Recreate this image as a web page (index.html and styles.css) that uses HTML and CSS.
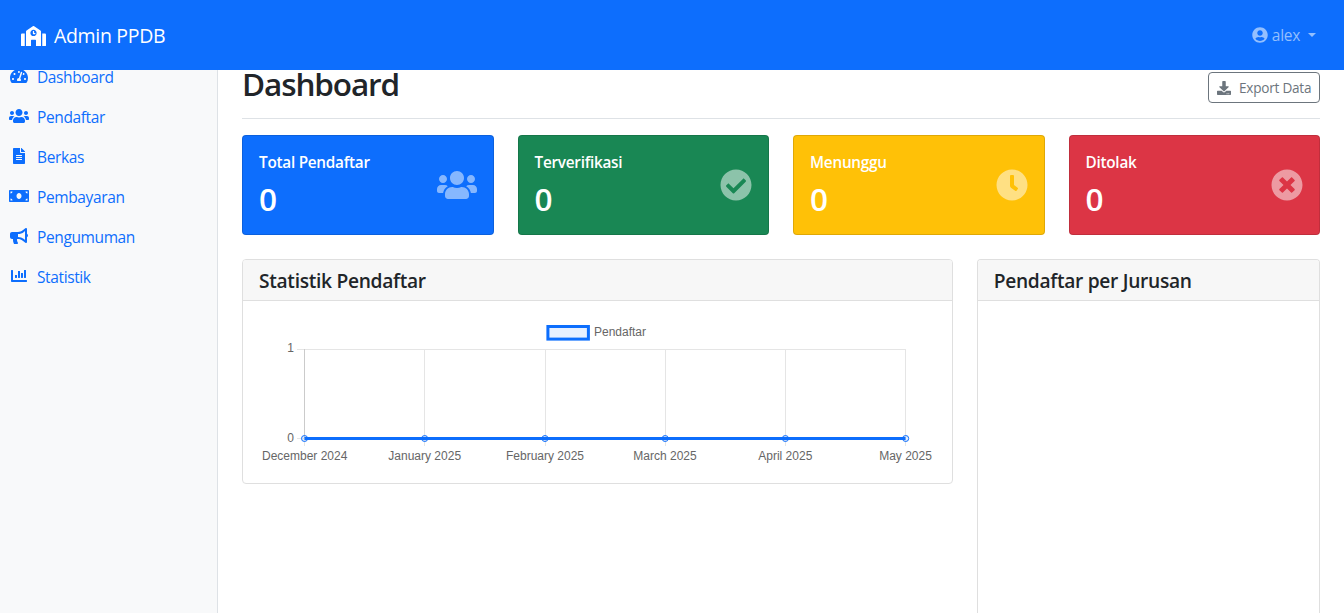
FILE: index.html
```html
<!DOCTYPE html>
<html lang="id">
<head>
<meta charset="utf-8">
<title>Dashboard - Admin PPDB</title>
<link rel="stylesheet" href="styles.css">
</head>
<body>
<svg class="sprite" aria-hidden="true">
  <symbol id="users" viewBox="0 0 640 512"><path d="M96 224c35.3 0 64-28.7 64-64s-28.7-64-64-64-64 28.7-64 64 28.7 64 64 64zm448 0c35.3 0 64-28.7 64-64s-28.7-64-64-64-64 28.7-64 64 28.7 64 64 64zm32 32h-64c-17.6 0-33.5 7.1-45.1 18.6 40.3 22.1 68.9 62 75.1 109.4h66c17.7 0 32-14.3 32-32v-32c0-35.3-28.7-64-64-64zm-256 0c61.9 0 112-50.1 112-112S381.9 32 320 32 208 82.1 208 144s50.1 112 112 112zm76.8 32h-8.3c-20.8 10-43.9 16-68.5 16s-47.6-6-68.5-16h-8.3C179.6 288 128 339.6 128 403.2V432c0 26.5 21.5 48 48 48h288c26.5 0 48-21.5 48-48v-28.8c0-63.6-51.6-115.2-115.2-115.2zm-223.7-13.4C161.5 263.1 145.6 256 128 256H64c-35.3 0-64 28.7-64 64v32c0 17.7 14.3 32 32 32h65.9c6.3-47.4 34.9-87.3 75.2-109.4z"/></symbol>
</svg>

<header class="navbar">
  <a class="brand">
    <svg class="brand-icon" viewBox="0 0 640 512"><path d="M0 224v272c0 8.84 7.16 16 16 16h80V192H32c-17.67 0-32 14.33-32 32zm360-48h-24v-40c0-4.42-3.58-8-8-8h-16c-4.42 0-8 3.58-8 8v64c0 4.42 3.58 8 8 8h48c4.42 0 8-3.58 8-8v-16c0-4.42-3.58-8-8-8zm137.75-63.96l-160-106.67a32.02 32.02 0 0 0-35.5 0l-160 106.67A32.002 32.002 0 0 0 128 138.66V512h128V368c0-8.84 7.16-16 16-16h96c8.84 0 16 7.16 16 16v144h128V138.67c0-10.7-5.35-20.69-14.25-26.63zM320 256c-44.18 0-80-35.82-80-80s35.82-80 80-80 80 35.82 80 80-35.82 80-80 80zm288-64h-64v320h80c8.84 0 16-7.16 16-16V224c0-17.67-14.33-32-32-32z"/></svg>
    <span>Admin PPDB</span>
  </a>
  <a class="user">
    <svg class="user-icon" viewBox="0 0 496 512"><path d="M248 8C111 8 0 119 0 256s111 248 248 248 248-111 248-248S385 8 248 8zm0 96c48.6 0 88 39.4 88 88s-39.4 88-88 88-88-39.4-88-88 39.4-88 88-88zm0 344c-58.7 0-111.3-26.6-146.5-68.2 18.8-35.4 55.6-59.8 98.5-59.8 2.4 0 4.8.4 7.1 1.1 13 4.2 26.6 6.9 40.9 6.9 14.3 0 28-2.7 40.9-6.9 2.3-.7 4.7-1.1 7.1-1.1 42.9 0 79.7 24.4 98.5 59.8C359.3 421.4 306.7 448 248 448z"/></svg>
    <span>alex</span>
    <i class="caret"></i>
  </a>
</header>

<div class="layout">
  <nav class="sidebar">
    <a class="nav-link"><svg class="nav-icon" viewBox="0 0 576 512"><path d="M288 32C128.94 32 0 160.94 0 320c0 52.8 14.25 102.26 39.06 144.8 5.61 9.62 16.3 15.2 27.44 15.2h443c11.14 0 21.83-5.58 27.44-15.2C561.75 422.26 576 372.8 576 320c0-159.06-128.94-288-288-288zm0 64c14.71 0 26.58 10.13 30.32 23.65-1.11 2.26-2.64 4.23-3.45 6.67l-9.22 27.67c-5.13 3.49-10.97 6.01-17.64 6.01-17.67 0-32-14.33-32-32S270.33 96 288 96zM96 384c-17.67 0-32-14.33-32-32s14.33-32 32-32 32 14.33 32 32-14.33 32-32 32zm48-160c-17.67 0-32-14.33-32-32s14.33-32 32-32 32 14.33 32 32-14.33 32-32 32zm246.77-72.41l-61.33 184C343.13 347.33 352 364.54 352 384c0 11.72-3.38 22.55-8.88 32H232.88c-5.5-9.45-8.88-20.28-8.88-32 0-33.94 26.5-61.43 59.9-63.59l61.34-184.01c4.17-12.56 17.73-19.45 30.36-15.17 12.57 4.19 19.35 17.79 15.17 30.36zm14.66 57.2l15.52-46.55c3.47-1.29 7.13-2.23 11.05-2.23 17.67 0 32 14.33 32 32s-14.33 32-32 32c-11.38-.01-20.89-6.28-26.57-15.22zM480 384c-17.67 0-32-14.33-32-32s14.33-32 32-32 32 14.33 32 32-14.33 32-32 32z"/></svg><span>Dashboard</span></a>
    <a class="nav-link"><svg class="nav-icon"><use href="#users"/></svg><span>Pendaftar</span></a>
    <a class="nav-link"><svg class="nav-icon" viewBox="0 0 384 512"><path d="M224 136V0H24C10.7 0 0 10.7 0 24v464c0 13.3 10.7 24 24 24h336c13.3 0 24-10.7 24-24V160H248c-13.2 0-24-10.8-24-24zm64 236c0 6.6-5.4 12-12 12H108c-6.6 0-12-5.4-12-12v-8c0-6.6 5.4-12 12-12h168c6.6 0 12 5.4 12 12v8zm0-64c0 6.6-5.4 12-12 12H108c-6.6 0-12-5.4-12-12v-8c0-6.6 5.4-12 12-12h168c6.6 0 12 5.4 12 12v8zm0-72v8c0 6.6-5.4 12-12 12H108c-6.6 0-12-5.4-12-12v-8c0-6.6 5.4-12 12-12h168c6.6 0 12 5.4 12 12zm96-114.1v6.1H256V0h6.1c6.4 0 12.5 2.5 17 7l97.9 98c4.5 4.5 7 10.6 7 16.9z"/></svg><span>Berkas</span></a>
    <a class="nav-link"><svg class="nav-icon" viewBox="0 0 640 512"><path d="M608 64H32C14.33 64 0 78.33 0 96v320c0 17.67 14.33 32 32 32h576c17.67 0 32-14.33 32-32V96c0-17.67-14.33-32-32-32zM48 400v-64c35.35 0 64 28.65 64 64H48zm0-224v-64h64c0 35.35-28.65 64-64 64zm272 176c-44.19 0-80-42.99-80-96 0-53.02 35.82-96 80-96s80 42.98 80 96c0 53.03-35.83 96-80 96zm272 48h-64c0-35.35 28.65-64 64-64v64zm0-224c-35.35 0-64-28.65-64-64h64v64z"/></svg><span>Pembayaran</span></a>
    <a class="nav-link"><svg class="nav-icon" viewBox="0 0 576 512"><path d="M576 240c0-23.63-12.95-44.04-32-55.12V32.01C544 23.26 537.02 0 512 0c-7.12 0-14.19 2.38-19.98 7.02l-85.03 68.03C364.28 109.19 310.66 128 256 128H64c-35.35 0-64 28.65-64 64v96c0 35.35 28.65 64 64 64h33.7c-1.39 10.48-2.18 21.14-2.18 32 0 39.77 9.26 77.35 25.56 110.94 5.19 10.69 16.52 17.06 28.4 17.06h74.28c26.05 0 41.69-29.84 25.9-50.56-16.4-21.52-26.15-48.36-26.15-77.44 0-11.11 1.62-21.79 4.41-32H256c54.66 0 108.28 18.81 150.98 52.95l85.03 68.03a32.023 32.023 0 0 0 19.98 7.02c24.92 0 32-22.78 32-32V295.13C563.05 284.04 576 263.63 576 240zm-96 141.42l-33.05-26.44C392.95 311.78 325.12 288 256 288v-96c69.12 0 136.95-23.78 190.95-66.98L480 98.58v282.84z"/></svg><span>Pengumuman</span></a>
    <a class="nav-link"><svg class="nav-icon" viewBox="0 0 512 512"><path d="M332.8 320h38.4c6.4 0 12.8-6.4 12.8-12.8V172.8c0-6.4-6.4-12.8-12.8-12.8h-38.4c-6.4 0-12.8 6.4-12.8 12.8v134.4c0 6.4 6.4 12.8 12.8 12.8zm96 0h38.4c6.4 0 12.8-6.4 12.8-12.8V76.8c0-6.4-6.4-12.8-12.8-12.8h-38.4c-6.4 0-12.8 6.4-12.8 12.8v230.4c0 6.4 6.4 12.8 12.8 12.8zm-288 0h38.4c6.4 0 12.8-6.4 12.8-12.8v-70.4c0-6.4-6.4-12.8-12.8-12.8h-38.4c-6.4 0-12.8 6.4-12.8 12.8v70.4c0 6.4 6.4 12.8 12.8 12.8zm96 0h38.4c6.4 0 12.8-6.4 12.8-12.8V108.8c0-6.4-6.4-12.8-12.8-12.8h-38.4c-6.4 0-12.8 6.4-12.8 12.8v198.4c0 6.4 6.4 12.8 12.8 12.8zM496 384H64V80c0-8.84-7.16-16-16-16H16C7.16 64 0 71.16 0 80v336c0 17.67 14.33 32 32 32h464c8.84 0 16-7.16 16-16v-32c0-8.84-7.16-16-16-16z"/></svg><span>Statistik</span></a>
  </nav>

  <main class="main">
    <div class="page-head">
      <h1 class="page-title">Dashboard</h1>
      <button class="export" type="button">
        <svg class="export-icon" viewBox="0 0 512 512"><path d="M216 0h80c13.3 0 24 10.7 24 24v168h87.7c17.8 0 26.7 21.5 14.1 34.1L269.7 378.3c-7.5 7.5-19.8 7.5-27.3 0L90.1 226.1c-12.6-12.6-3.7-34.1 14.1-34.1H192V24c0-13.3 10.7-24 24-24zm296 376v112c0 13.3-10.7 24-24 24H24c-13.3 0-24-10.7-24-24V376c0-13.3 10.7-24 24-24h146.7l49 49c20.1 20.1 52.5 20.1 72.6 0l49-49H488c13.3 0 24 10.7 24 24zm-124 88c0-11-9-20-20-20s-20 9-20 20 9 20 20 20 20-9 20-20zm64 0c0-11-9-20-20-20s-20 9-20 20 9 20 20 20 20-9 20-20z"/></svg>
        <span>Export Data</span>
      </button>
    </div>

    <section class="stats">
      <article class="stat stat-primary">
        <div><h6 class="stat-label">Total Pendaftar</h6><p class="stat-value">0</p></div>
        <svg class="stat-icon stat-icon-wide"><use href="#users"/></svg>
      </article>
      <article class="stat stat-success">
        <div><h6 class="stat-label">Terverifikasi</h6><p class="stat-value">0</p></div>
        <svg class="stat-icon" viewBox="0 0 512 512"><path d="M504 256c0 136.967-111.033 248-248 248S8 392.967 8 256 119.033 8 256 8s248 111.033 248 248zM227.314 387.314l184-184c6.248-6.248 6.248-16.379 0-22.627l-22.627-22.627c-6.248-6.249-16.379-6.249-22.628 0L216 308.118l-70.059-70.059c-6.248-6.248-16.379-6.248-22.628 0l-22.627 22.627c-6.248 6.248-6.248 16.379 0 22.627l104 104c6.249 6.249 16.379 6.249 22.628.001z"/></svg>
      </article>
      <article class="stat stat-warning">
        <div><h6 class="stat-label">Menunggu</h6><p class="stat-value">0</p></div>
        <svg class="stat-icon" viewBox="0 0 512 512"><path d="M256,8C119,8,8,119,8,256S119,504,256,504,504,393,504,256,393,8,256,8Zm92.49,313h0l-20,25a16,16,0,0,1-22.49,2.5h0l-67-49.72a40,40,0,0,1-15-31.23V112a16,16,0,0,1,16-16h32a16,16,0,0,1,16,16V256l58,42.5A16,16,0,0,1,348.49,321Z"/></svg>
      </article>
      <article class="stat stat-danger">
        <div><h6 class="stat-label">Ditolak</h6><p class="stat-value">0</p></div>
        <svg class="stat-icon" viewBox="0 0 512 512"><path d="M256 8C119 8 8 119 8 256s111 248 248 248 248-111 248-248S393 8 256 8zm121.6 313.1c4.7 4.7 4.7 12.3 0 17L338 377.6c-4.7 4.7-12.3 4.7-17 0L256 312l-65.1 65.6c-4.7 4.7-12.3 4.7-17 0L134.4 338c-4.7-4.7-4.7-12.3 0-17l65.6-65-65.6-65.1c-4.7-4.7-4.7-12.3 0-17l39.6-39.6c4.7-4.7 12.3-4.7 17 0l65 65.7 65.1-65.6c4.7-4.7 12.3-4.7 17 0l39.6 39.6c4.7 4.7 4.7 12.3 0 17L312 256l65.6 65.1z"/></svg>
      </article>
    </section>

    <section class="panels">
      <article class="card card-chart">
        <h5 class="card-head">Statistik Pendaftar</h5>
        <div class="card-body">
          <svg class="chart" viewBox="0 0 678 150">
            <rect x="288.9" y="9.5" width="40.5" height="12.6" fill="#e7f0ff" stroke="#0d6efd" stroke-width="3"/>
            <text x="335" y="19">Pendaftar</text>
            <g class="grid">
              <path d="M38 32.5H647M38 121.5H647"/>
              <path class="axis" d="M45.5 32V121"/>
              <path d="M45.5 121V129M165.5 32V129M286.5 32V129M406.5 32V129M526.5 32V129M646.5 32V129"/>
            </g>
            <path class="line" d="M45.5 121.5H646.5"/>
            <g class="dots">
              <circle cx="45.5" cy="121.5" r="3"/><circle cx="165.7" cy="121.5" r="3"/><circle cx="286" cy="121.5" r="3"/><circle cx="406.2" cy="121.5" r="3"/><circle cx="526.4" cy="121.5" r="3"/><circle cx="646.7" cy="121.5" r="3"/>
            </g>
            <g class="y-labels"><text x="35" y="35">1</text><text x="35" y="125">0</text></g>
            <g class="x-labels">
              <text x="45.7" y="143">December 2024</text><text x="165.7" y="143">January 2025</text><text x="286" y="143">February 2025</text><text x="406" y="143">March 2025</text><text x="526.3" y="143">April 2025</text><text x="646.5" y="143">May 2025</text>
            </g>
          </svg>
        </div>
      </article>
      <article class="card card-major">
        <h5 class="card-head">Pendaftar per Jurusan</h5>
      </article>
    </section>
  </main>
</div>
</body>
</html>
```
FILE: styles.css
```css
* { box-sizing: border-box; }
body {
  margin: 0;
  height: 613px;
  overflow: hidden;
  display: flex;
  flex-direction: column;
  font-family: "Open Sans", "Noto Sans", sans-serif;
  font-size: 15.5px;
  color: #212529;
  background: #fff;
}
svg { fill: currentColor; flex: none; }
h1, h5, h6, p { margin: 0; }
.sprite { display: none; }

.navbar {
  position: relative;
  z-index: 1;
  height: 70px;
  flex: none;
  display: flex;
  align-items: center;
  justify-content: space-between;
  padding: 0 28px 0 21px;
  background: #0d6efd;
  color: #fff;
}
.brand { display: flex; align-items: center; gap: 8px; font-size: 19.5px; letter-spacing: -0.32px; line-height: 30px; padding-top: 2px; }
.brand-icon { width: 25px; height: 20px; }
.user { display: flex; align-items: center; color: #93bffe; line-height: 24px; letter-spacing: -0.3px; }
.user-icon { width: 16px; height: 16px; margin-right: 4px; }
.caret { margin-left: 8px; border: 4px solid transparent; border-top-color: currentColor; border-bottom: 0; }

.layout { flex: 1; min-height: 0; display: flex; }
.sidebar {
  width: 218px;
  flex: none;
  background: #f8f9fa;
  border-right: 1px solid #dee2e6;
  color: #0d6efd;
}
.nav-link { display: flex; align-items: center; gap: 8px; height: 40px; padding-left: 9px; letter-spacing: -0.38px; }
.nav-link:first-child { margin-top: -14px; }
.nav-link span { padding-top: 1px; }
.nav-icon { width: 20px; height: 16px; }

.main { flex: 1; min-width: 0; padding: 0 24px; display: flex; flex-direction: column; }
.page-head {
  flex: none;
  height: 49px;
  display: flex;
  justify-content: space-between;
  align-items: flex-start;
  border-bottom: 1px solid #dee2e6;
}
.page-title { font-size: 31.5px; font-weight: 600; line-height: 38px; margin-top: -5px; letter-spacing: -1.1px; }
.export {
  display: flex;
  align-items: center;
  gap: 8px;
  width: 112px;
  height: 31px;
  margin-top: 2px;
  padding: 0 8px;
  border: 1px solid #6c757d;
  border-radius: 4px;
  background: #fff;
  color: #6c757d;
  font: 13.6px/21px "Open Sans", "Noto Sans", sans-serif;
  letter-spacing: -0.24px;
  white-space: nowrap;
}
.export-icon { width: 14px; height: 14px; }

.stats { flex: none; display: grid; grid-template-columns: repeat(4, 1fr); gap: 24px; margin-top: 16px; }
.stat {
  height: 100px;
  display: flex;
  justify-content: space-between;
  align-items: center;
  padding: 0 16px;
  border: 1px solid rgba(0, 0, 0, .125);
  border-radius: 4px;
  color: #fff;
}
.stat-primary { background: #0d6efd; }
.stat-success { background: #198754; }
.stat-warning { background: #ffc107; }
.stat-danger { background: #dc3545; }
.stat-label { font-size: 15.3px; font-weight: 600; line-height: 19px; margin-bottom: 8px; letter-spacing: -0.25px; }
.stat-value { font-size: 31.5px; font-weight: 600; line-height: 38px; }
.stat-icon { width: 32px; height: 32px; opacity: .5; }
.stat-icon-wide { width: 40px; }

.panels { flex: 1; min-height: 0; display: grid; grid-template-columns: 710.66px 1fr; gap: 24px; margin-top: 24px; }
.card { border: 1px solid #dfdfdf; border-radius: 4px; overflow: hidden; }
.card-chart { align-self: start; }
.card-major { border-bottom: 0; border-radius: 4px 4px 0 0; }
.card-head {
  height: 41px;
  padding: 0 16px;
  font-size: 19.2px;
  font-weight: 600;
  line-height: 42px;
  letter-spacing: -0.3px;
  background: #f7f7f7;
  border-bottom: 1px solid #dfdfdf;
}
.card-body { padding: 16px; height: 182px; }
.chart { display: block; width: 678px; height: 150px; font: 12px "Liberation Sans", Arial, sans-serif; fill: #666; }
.grid { fill: none; stroke: #e5e5e5; }
.axis { stroke: #cbcbcb; }
.line { stroke: #0d6efd; stroke-width: 3; }
.dots { fill: rgba(13, 110, 253, .1); stroke: #0d6efd; stroke-width: 1; }
.y-labels { text-anchor: end; }
.x-labels { text-anchor: middle; }
```
